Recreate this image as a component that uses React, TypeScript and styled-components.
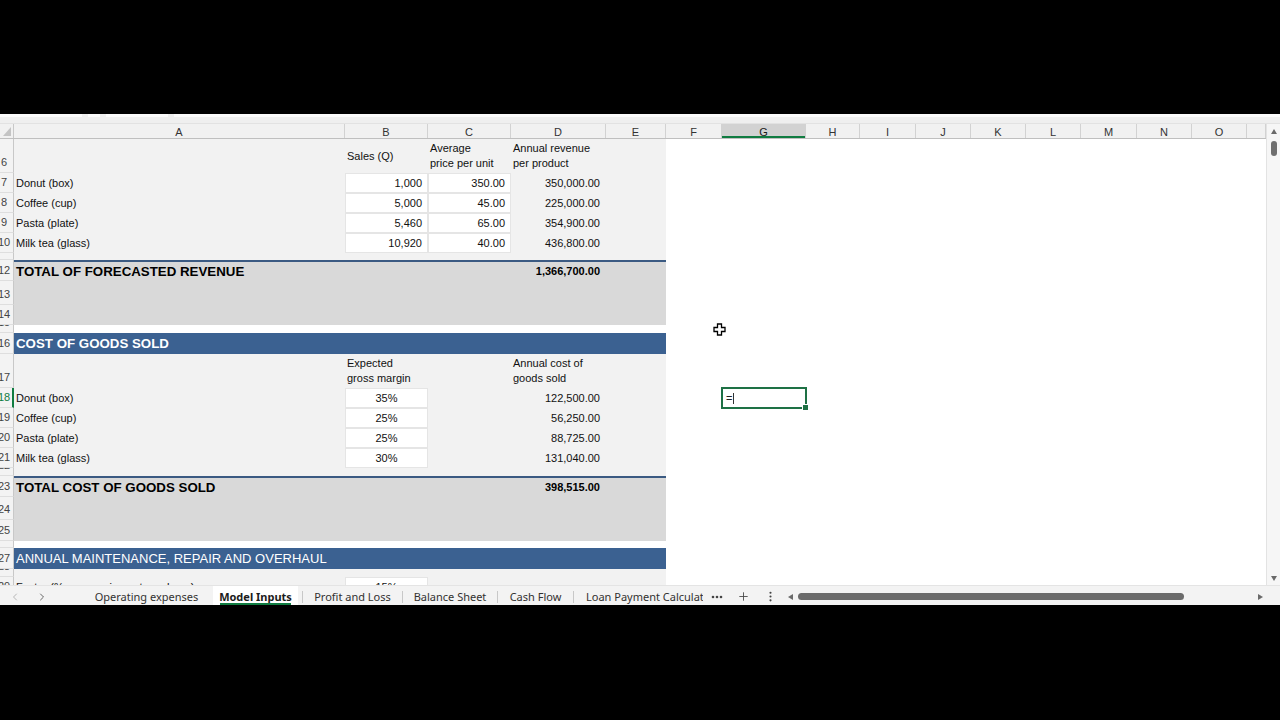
import styled, { createGlobalStyle, css } from 'styled-components'
import { ChevronLeft, ChevronRight, Plus, EllipsisVertical } from 'lucide-react'

const GlobalStyle = createGlobalStyle`
  html, body {
    margin: 0;
    padding: 0;
    background: #000;
  }
  body {
    font-family: 'Liberation Sans', Arial, sans-serif;
  }
  * {
    box-sizing: border-box;
  }
`

const LEFT_COLS = [331, 83, 83, 95, 60]
const RIGHT_COLS = [56, 84, 54, 56, 55, 55, 55, 56, 55, 55, 19]
const LETTERS = 'ABCDEFGHIJKLMNOP'
const SELECTED_ROW = 18
const SELECTED_COL = 1 // G inside the right block

type Tone = 'plain' | 'total' | 'band' | 'gap'
type Variant = 'title' | 'band' | 'bandThin' | 'bold'
type CellData = { t: string; a?: 'l' | 'r' | 'c'; v?: Variant; input?: boolean }
type RowData = { n: number; h: number; tone: Tone; rule?: boolean; cells?: (CellData | null)[] }

const item = (t: string): CellData => ({ t })
const num = (t: string, input = false): CellData => ({ t, a: 'r', input })

const rows: RowData[] = [
  {
    n: 6,
    h: 34,
    tone: 'plain',
    cells: [null, item('Sales (Q)'), item('Average\nprice per unit'), item('Annual revenue\nper product')],
  },
  { n: 7, h: 20, tone: 'plain', cells: [item('Donut (box)'), num('1,000', true), num('350.00', true), num('350,000.00')] },
  { n: 8, h: 20, tone: 'plain', cells: [item('Coffee (cup)'), num('5,000', true), num('45.00', true), num('225,000.00')] },
  { n: 9, h: 20, tone: 'plain', cells: [item('Pasta (plate)'), num('5,460', true), num('65.00', true), num('354,900.00')] },
  { n: 10, h: 20, tone: 'plain', cells: [item('Milk tea (glass)'), num('10,920', true), num('40.00', true), num('436,800.00')] },
  { n: 11, h: 7, tone: 'plain' },
  {
    n: 12,
    h: 21,
    tone: 'total',
    rule: true,
    cells: [{ t: 'TOTAL OF FORECASTED REVENUE', v: 'title' }, null, null, { t: '1,366,700.00', a: 'r', v: 'bold' }],
  },
  { n: 13, h: 24, tone: 'total' },
  { n: 14, h: 20, tone: 'total' },
  { n: 15, h: 8, tone: 'gap' },
  { n: 16, h: 21, tone: 'band', cells: [{ t: 'COST OF GOODS SOLD', v: 'band' }] },
  {
    n: 17,
    h: 34,
    tone: 'plain',
    cells: [null, item('Expected\ngross margin'), null, item('Annual cost of\ngoods sold')],
  },
  { n: 18, h: 20, tone: 'plain', cells: [item('Donut (box)'), { t: '35%', a: 'c', input: true }, null, num('122,500.00')] },
  { n: 19, h: 20, tone: 'plain', cells: [item('Coffee (cup)'), { t: '25%', a: 'c', input: true }, null, num('56,250.00')] },
  { n: 20, h: 20, tone: 'plain', cells: [item('Pasta (plate)'), { t: '25%', a: 'c', input: true }, null, num('88,725.00')] },
  { n: 21, h: 20, tone: 'plain', cells: [item('Milk tea (glass)'), { t: '30%', a: 'c', input: true }, null, num('131,040.00')] },
  { n: 22, h: 8, tone: 'plain' },
  {
    n: 23,
    h: 21,
    tone: 'total',
    rule: true,
    cells: [{ t: 'TOTAL COST OF GOODS SOLD', v: 'title' }, null, null, { t: '398,515.00', a: 'r', v: 'bold' }],
  },
  { n: 24, h: 23, tone: 'total' },
  { n: 25, h: 21, tone: 'total' },
  { n: 26, h: 7, tone: 'gap' },
  { n: 27, h: 21, tone: 'band', cells: [{ t: 'ANNUAL MAINTENANCE, REPAIR AND OVERHAUL', v: 'bandThin' }] },
  { n: 28, h: 8, tone: 'plain' },
  {
    n: 29,
    h: 20,
    tone: 'plain',
    cells: [item('Factor (% over equipment purchase)'), { t: '15%', a: 'c', input: true }],
  },
]

const tabs = ['Operating expenses', 'Model Inputs', 'Profit and Loss', 'Balance Sheet', 'Cash Flow']

const Frame = styled.div`
  position: relative;
  width: 1280px;
  height: 720px;
  display: flex;
  flex-direction: column;
  background: #000;
  overflow: hidden;
`

const Letterbox = styled.div<{ $h: number }>`
  flex: none;
  height: ${({ $h }) => $h}px;
  background: #000;
`

const Workbook = styled.div`
  flex: none;
  height: 491px;
  display: flex;
  flex-direction: column;
  background: #f3f3f3;
`

const FormulaStrip = styled.div`
  flex: none;
  height: 10px;
  display: flex;
  gap: 6px;
  background: #efefef;
  border-bottom: 1px solid #e2e2e2;
`

const FormulaEdge = styled.div<{ $w?: number }>`
  height: 3px;
  background: #fbfbfb;
  ${({ $w }) => ($w ? `width: ${$w}px; flex: none;` : 'flex: 1;')}
`

const SheetArea = styled.div`
  flex: none;
  height: 461px;
  display: flex;
  overflow: hidden;
`

const Grid = styled.div`
  flex: 1;
  display: flex;
  flex-direction: column;
  overflow: hidden;
  background: #fff;
`

const HeaderRow = styled.div`
  flex: none;
  height: 15px;
  display: flex;
  background: #f1f1f1;
  border-bottom: 1px solid #bfbfbf;
`

const Corner = styled.div`
  width: 14px;
  flex: none;
  position: relative;
  border-right: 1px solid #c8c8c8;
  &::after {
    content: '';
    position: absolute;
    right: 2px;
    bottom: 2px;
    border-left: 8px solid transparent;
    border-bottom: 9px solid #c4c4c4;
  }
`

const ColHead = styled.div<{ $w: number; $active?: boolean }>`
  width: ${({ $w }) => $w}px;
  flex: none;
  display: flex;
  align-items: center;
  justify-content: center;
  padding-top: 1px;
  font-size: 11px;
  color: #333;
  border-right: 1px solid #d2d2d2;
  ${({ $active }) =>
    $active &&
    css`
      background: #d2d2d2;
      box-shadow: inset 0 -2px 0 #107c41;
      color: #1a1a1a;
    `}
`

const Row = styled.div<{ $h: number }>`
  flex: none;
  height: ${({ $h }) => $h}px;
  display: flex;
`

const RowHead = styled.div<{ $active?: boolean }>`
  width: 14px;
  flex: none;
  display: flex;
  align-items: flex-end;
  padding-bottom: 3px;
  overflow: hidden;
  font-size: 11px;
  line-height: 13px;
  color: ${({ $active }) => ($active ? '#107c41' : '#444')};
  background: #f3f3f3;
  border-bottom: 1px solid #dedede;
  border-right: ${({ $active }) => ($active ? '2px solid #107c41' : '1px solid #c8c8c8')};
`

const RowNumber = styled.span`
  width: 8px;
  flex: none;
  display: flex;
  justify-content: center;
  white-space: nowrap;
`

const toneFill: Record<Tone, string> = {
  plain: '#f2f2f2',
  total: '#d9d9d9',
  band: '#3b6191',
  gap: '#ffffff',
}

const Block = styled.div<{ $tone: Tone; $rule?: boolean }>`
  flex: none;
  width: 652px;
  display: grid;
  grid-template-columns: ${LEFT_COLS.map((w) => `${w}px`).join(' ')};
  background: ${({ $tone }) => toneFill[$tone]};
  ${({ $rule }) => $rule && 'border-top: 2px solid #3b5a82;'}
`

const Blank = styled.div`
  flex: 1;
  display: grid;
  grid-template-columns: ${RIGHT_COLS.map((w) => `${w}px`).join(' ')};
  background: #fff;
`

const Cell = styled.div<{ $align?: 'l' | 'r' | 'c'; $input?: boolean }>`
  display: flex;
  align-items: center;
  justify-content: ${({ $align }) => ($align === 'r' ? 'flex-end' : $align === 'c' ? 'center' : 'flex-start')};
  padding: ${({ $align }) => ($align === 'r' ? '0 6px 0 0' : $align === 'c' ? '0' : '0 0 0 2px')};
  min-width: 0;
  font-size: 11px;
  line-height: 15px;
  color: #111;
  ${({ $input }) =>
    $input &&
    css`
      background: #fff;
      box-shadow: inset 0 0 0 1px #e5e5e5;
    `}
`

const CellText = styled.span<{ $v?: Variant }>`
  white-space: pre;
  ${({ $v }) => $v === 'title' && 'font-size: 13.3px; font-weight: 700; color: #000;'}
  ${({ $v }) => $v === 'bold' && 'font-weight: 700; color: #000;'}
  ${({ $v }) => $v === 'band' && 'font-size: 13.3px; font-weight: 700; color: #fff;'}
  ${({ $v }) => $v === 'bandThin' && 'font-size: 13px; color: #fff;'}
`

const EmptyCell = styled.div`
  position: relative;
`

const Selection = styled.div`
  position: absolute;
  inset: -1px;
  border: 2px solid #1e7145;
  display: flex;
  align-items: center;
  padding-left: 3px;
  font-size: 11px;
  color: #222;
  z-index: 2;
  &::after {
    content: '';
    position: absolute;
    right: -4px;
    bottom: -4px;
    width: 5px;
    height: 5px;
    background: #1e7145;
    border: 1px solid #fff;
  }
`

const Caret = styled.span`
  width: 1px;
  height: 11px;
  margin-left: 1px;
  background: #333;
`

const VScroll = styled.div`
  width: 14px;
  flex: none;
  display: flex;
  flex-direction: column;
  align-items: center;
  background: #f6f6f6;
  border-left: 1px solid #e3e3e3;
  padding: 5px 0 4px;
`

const TriUp = styled.div`
  border-left: 3.5px solid transparent;
  border-right: 3.5px solid transparent;
  border-bottom: 5px solid #6a6a6a;
`

const TriDown = styled.div`
  margin-top: auto;
  border-left: 3.5px solid transparent;
  border-right: 3.5px solid transparent;
  border-top: 5px solid #6a6a6a;
`

const VThumb = styled.div`
  margin-top: 7px;
  width: 6px;
  height: 15px;
  border-radius: 3px;
  background: #6f6f6f;
`

const TabBar = styled.div`
  flex: none;
  height: 20px;
  display: flex;
  background: #f3f3f3;
  border-top: 1px solid #e4e4e4;
  font-family: 'Noto Sans', 'Open Sans', sans-serif;
  font-size: 11px;
  color: #323130;
`

const Nav = styled.div`
  width: 80px;
  flex: none;
  display: flex;
  align-items: center;
  gap: 13px;
  padding: 2px 0 0 8px;
`

const NavButton = styled.div<{ $dim?: boolean }>`
  width: 14px;
  display: flex;
  justify-content: center;
  color: ${({ $dim }) => ($dim ? '#a6a6a6' : '#444')};
`

const Tab = styled.div<{ $w: number; $active?: boolean; $start?: boolean }>`
  width: ${({ $w }) => $w}px;
  flex: none;
  position: relative;
  display: flex;
  align-items: center;
  justify-content: ${({ $start }) => ($start ? 'flex-start' : 'center')};
  padding: 2px 0 0 ${({ $start }) => ($start ? '12px' : '0')};
  white-space: nowrap;
  overflow: hidden;
  ${({ $active }) =>
    $active &&
    css`
      background: #fff;
      font-weight: 700;
      color: #1b1b1b;
      &::after {
        content: '';
        position: absolute;
        left: 7px;
        right: 7px;
        bottom: 0;
        height: 2px;
        background: #107c41;
      }
    `}
`

const Sep = styled.div<{ $gap?: number }>`
  width: 1px;
  height: 12px;
  flex: none;
  align-self: center;
  margin: 2px 0 0 ${({ $gap }) => $gap ?? 0}px;
  background: #c8c8c8;
`

const IconSlot = styled.div`
  width: 27px;
  flex: none;
  display: flex;
  align-items: center;
  justify-content: center;
  padding-top: 2px;
  color: #444;
`

const HScroll = styled.div`
  flex: 1;
  display: flex;
  align-items: center;
  padding: 2px 17px 0 4px;
`

const TriLeft = styled.div`
  border-top: 3.5px solid transparent;
  border-bottom: 3.5px solid transparent;
  border-right: 5px solid #6a6a6a;
`

const TriRight = styled.div`
  margin-left: auto;
  border-top: 3.5px solid transparent;
  border-bottom: 3.5px solid transparent;
  border-left: 5px solid #6a6a6a;
`

const HThumb = styled.div`
  margin-left: 5px;
  width: 386px;
  height: 7px;
  border-radius: 4px;
  background: #6b6b6b;
`

const Pointer = styled.svg`
  position: absolute;
  left: 713px;
  top: 323px;
`

function Dots() {
  return (
    <svg width='12' height='4' viewBox='0 0 12 4'>
      <circle cx='2' cy='2' r='1.3' fill='#444' />
      <circle cx='6' cy='2' r='1.3' fill='#444' />
      <circle cx='10' cy='2' r='1.3' fill='#444' />
    </svg>
  )
}

function SheetRow({ row }: { row: RowData }) {
  const active = row.n === SELECTED_ROW
  return (
    <Row $h={row.h}>
      <RowHead $active={active}>
        <RowNumber>{row.n}</RowNumber>
      </RowHead>
      <Block $tone={row.tone} $rule={row.rule}>
        {LEFT_COLS.map((_, i) => {
          const cell = row.cells?.[i]
          return (
            <Cell key={`c-${row.n}-${i}`} $align={cell?.a} $input={cell?.input}>
              {cell && <CellText $v={cell.v}>{cell.t}</CellText>}
            </Cell>
          )
        })}
      </Block>
      <Blank>
        {RIGHT_COLS.map((_, i) => (
          <EmptyCell key={`e-${row.n}-${i}`}>
            {active && i === SELECTED_COL && (
              <Selection>
                =<Caret />
              </Selection>
            )}
          </EmptyCell>
        ))}
      </Blank>
    </Row>
  )
}

export default function App() {
  const widths = [...LEFT_COLS, ...RIGHT_COLS]
  return (
    <Frame>
      <GlobalStyle />
      <Letterbox $h={114} />
      <Workbook>
        <FormulaStrip>
          <FormulaEdge $w={82} />
          <FormulaEdge $w={12} />
          <FormulaEdge $w={62} />
          <FormulaEdge />
        </FormulaStrip>
        <SheetArea>
          <Grid>
            <HeaderRow>
              <Corner />
              {widths.map((w, i) => (
                <ColHead key={`h-${i}`} $w={w} $active={i === LEFT_COLS.length + SELECTED_COL}>
                  {i < widths.length - 1 ? LETTERS[i] : ''}
                </ColHead>
              ))}
            </HeaderRow>
            {rows.map((row) => (
              <SheetRow key={`r-${row.n}`} row={row} />
            ))}
          </Grid>
          <VScroll>
            <TriUp />
            <VThumb />
            <TriDown />
          </VScroll>
        </SheetArea>
        <TabBar>
          <Nav>
            <NavButton $dim>
              <ChevronLeft size={12} strokeWidth={1.6} />
            </NavButton>
            <NavButton>
              <ChevronRight size={12} strokeWidth={1.6} />
            </NavButton>
          </Nav>
          <Tab $w={133}>{tabs[0]}</Tab>
          <Tab $w={85} $active>
            {tabs[1]}
          </Tab>
          <Sep $gap={4} />
          <Tab $w={99}>{tabs[2]}</Tab>
          <Sep />
          <Tab $w={94}>{tabs[3]}</Tab>
          <Sep />
          <Tab $w={75}>{tabs[4]}</Tab>
          <Sep />
          <Tab $w={129} $start>
            Loan Payment Calculator
          </Tab>
          <IconSlot>
            <Dots />
          </IconSlot>
          <IconSlot>
            <Plus size={13} strokeWidth={1.6} />
          </IconSlot>
          <IconSlot>
            <EllipsisVertical size={13} strokeWidth={2} />
          </IconSlot>
          <HScroll>
            <TriLeft />
            <HThumb />
            <TriRight />
          </HScroll>
        </TabBar>
      </Workbook>
      <Letterbox $h={115} />
      <Pointer width='13' height='13' viewBox='0 0 13 13'>
        <polygon
          points='4.5,1 8.5,1 8.5,4.5 12,4.5 12,8.5 8.5,8.5 8.5,12 4.5,12 4.5,8.5 1,8.5 1,4.5 4.5,4.5'
          fill='#fff'
          stroke='#000'
          strokeWidth='1.3'
        />
      </Pointer>
    </Frame>
  )
}
